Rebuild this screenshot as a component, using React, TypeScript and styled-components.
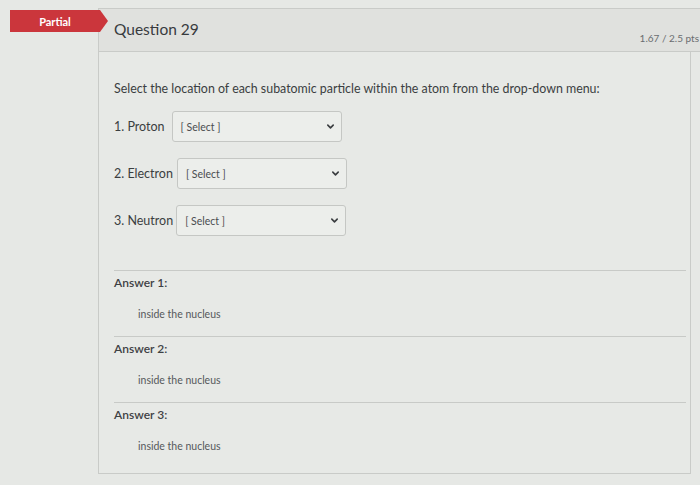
import React from "react";
import styled, { createGlobalStyle } from "styled-components";

const GlobalStyle = createGlobalStyle`
  body {
    margin: 0;
    background: #e6e8e5;
    font-family: Lato, "Open Sans", sans-serif;
    color: #3b3e41;
  }
`;

const Page = styled.div`
  display: flex;
  align-items: flex-start;
  height: 485px;
  padding-top: 8px;
  box-sizing: border-box;
  overflow: hidden;
`;

const Banner = styled.div`
  flex-shrink: 0;
  width: 98px;
  height: 22px;
  margin: 2px -10px 0 10px;
  padding-right: 8px;
  box-sizing: border-box;
  background: #cb363c;
  clip-path: polygon(0 0, 90px 0, 98px 50%, 90px 100%, 0 100%);
  color: #fff;
  font-size: 11px;
  font-weight: 700;
  display: flex;
  align-items: center;
  justify-content: center;
  position: relative;
  z-index: 1;
`;

const Card = styled.div`
  flex: 1;
  height: 477px;
  display: flex;
  flex-direction: column;
  padding-bottom: 11px;
  box-sizing: border-box;
`;

const Header = styled.div`
  height: 44px;
  box-sizing: border-box;
  display: flex;
  justify-content: space-between;
  align-items: flex-start;
  padding: 0 1px 0 15px;
  background: #e0e1de;
  border-top: 1px solid #c9cbc8;
  border-bottom: 1px solid #c9cbc8;
  border-left: 1px solid #c9cbc8;
`;

const Title = styled.div`
  font-size: 15.5px;
  margin-top: 11px;
  color: #383b3e;
`;

const Points = styled.div`
  font-size: 10px;
  margin-top: 23px;
  color: #6a6d70;
  white-space: nowrap;
`;

const Body = styled.div`
  flex: 1;
  margin-right: 9px;
  padding: 28px 4px 0 15px;
  border: 1px solid #c9cbc8;
  border-top: none;
  background: #e7e9e6;
`;

const Intro = styled.p`
  margin: 0 0 13px;
  font-size: 12.4px;
  line-height: 18px;
  color: #3b3e41;
`;

const Rows = styled.div`
  display: flex;
  flex-direction: column;
  gap: 16px;
`;

const Row = styled.div`
  display: flex;
  align-items: center;
  gap: ${(p: { $gap: number }) => p.$gap}px;
`;

const Label = styled.span`
  font-size: 12.5px;
  color: #3b3e41;
`;

const SelectBox = styled.div`
  width: 170px;
  height: 31px;
  box-sizing: border-box;
  border: 1px solid #c5c7c4;
  border-radius: 3px;
  background: #eceeeb;
  display: flex;
  align-items: center;
  justify-content: space-between;
  padding: 0 6px 0 8px;
  font-size: 10.5px;
  color: #4a4d50;
`;

const Answers = styled.div`
  margin-top: 34px;
`;

const AnswerBlock = styled.div`
  border-top: 1px solid #c8cac7;
  padding: 4px 0 15px;
`;

const AnswerLabel = styled.div`
  font-size: 12px;
  line-height: 16px;
  font-weight: 600;
  color: #3e4144;
`;

const AnswerValue = styled.div`
  margin-top: 16px;
  padding-left: 24px;
  font-size: 10.5px;
  line-height: 14px;
  color: #55585b;
`;

const Chevron = () => (
  <svg width="9" height="9" viewBox="0 0 10 10">
    <path
      d="M2 3.5 L5 6.5 L8 3.5"
      fill="none"
      stroke="#3a3d40"
      strokeWidth="1.8"
      strokeLinecap="round"
      strokeLinejoin="round"
    />
  </svg>
);

const questions = [
  { label: "1. Proton", gap: 7 },
  { label: "2. Electron", gap: 4 },
  { label: "3. Neutron", gap: 3 },
];

export default function App() {
  return (
    <>
      <GlobalStyle />
      <Page>
        <Banner>Partial</Banner>
        <Card>
          <Header>
            <Title>Question 29</Title>
            <Points>1.67 / 2.5 pts</Points>
          </Header>
          <Body>
            <Intro>
              Select the location of each subatomic particle within the atom
              from the drop-down menu:
            </Intro>
            <Rows>
              {questions.map((q) => (
                <Row key={q.label} $gap={q.gap}>
                  <Label>{q.label}</Label>
                  <SelectBox>
                    <span>[ Select ]</span>
                    <Chevron />
                  </SelectBox>
                </Row>
              ))}
            </Rows>
            <Answers>
              {[1, 2, 3].map((n) => (
                <AnswerBlock key={n}>
                  <AnswerLabel>Answer {n}:</AnswerLabel>
                  <AnswerValue>inside the nucleus</AnswerValue>
                </AnswerBlock>
              ))}
            </Answers>
          </Body>
        </Card>
      </Page>
    </>
  );
}
